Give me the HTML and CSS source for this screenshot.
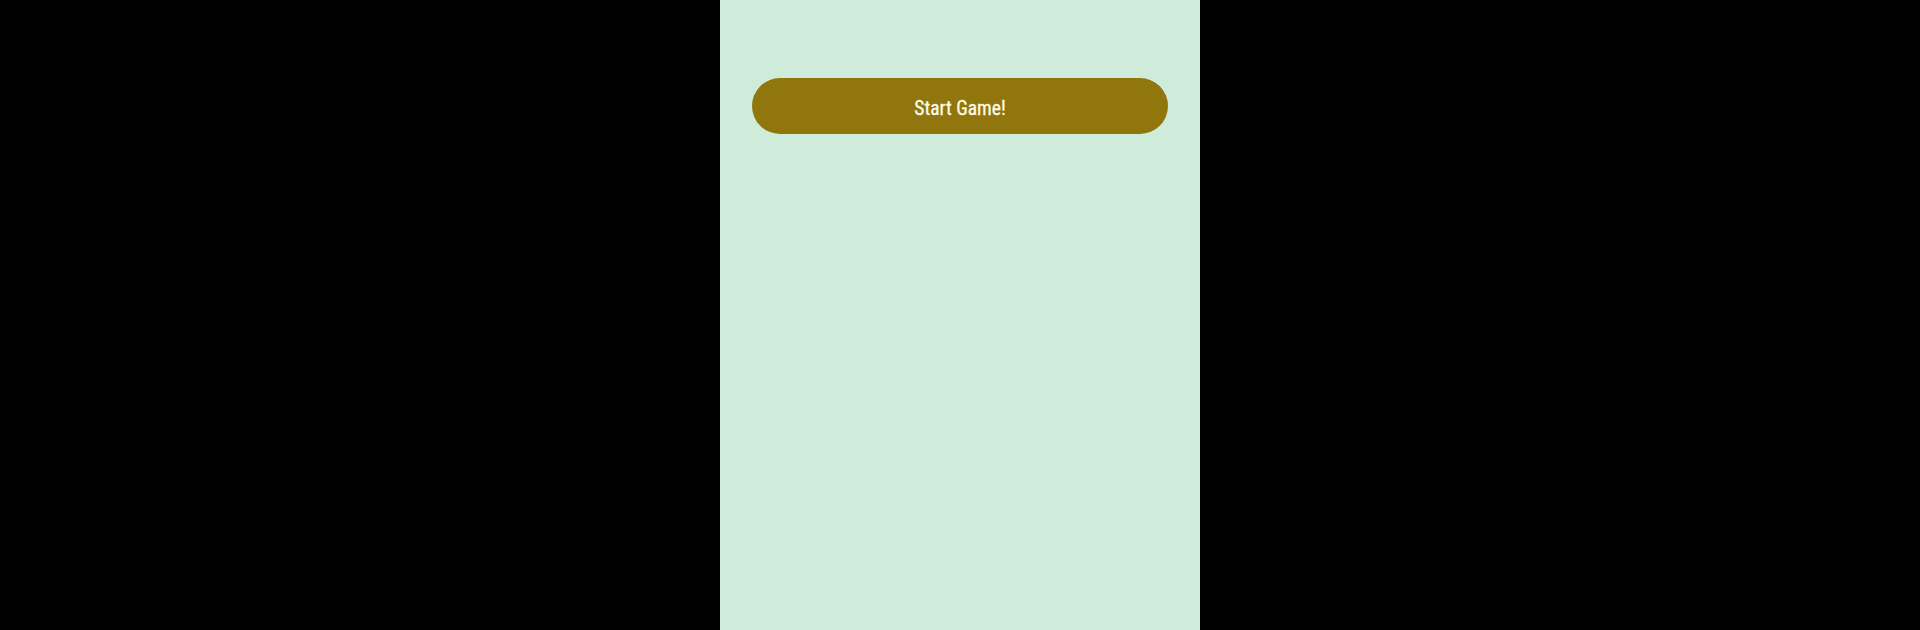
FILE: index.html
```html
<!DOCTYPE html>
<html>
<head>
<meta charset="utf-8">
<link rel="stylesheet" href="styles.css">
</head>
<body>
<div class="stage">
  <main class="panel">
    <button class="start-btn"><span class="label">Start Game!</span></button>
  </main>
</div>
</body>
</html>
```

FILE: styles.css
```css
html, body {
  margin: 0;
  padding: 0;
  height: 100%;
  background: #000;
}
.stage {
  display: flex;
  justify-content: center;
  height: 630px;
}
.panel {
  width: 480px;
  height: 100%;
  background: #cfebd9;
  box-sizing: border-box;
  padding: 78px 32px 0;
  display: flex;
  flex-direction: column;
}
.start-btn {
  height: 56px;
  width: 100%;
  border: none;
  border-radius: 28px;
  background: #91760d;
  color: #fffbe6;
  font-family: "Roboto Condensed", Roboto, "Liberation Sans", sans-serif;
  font-size: 19.5px;
  font-weight: 400;
  -webkit-text-stroke: 0.3px #fffbe6;
  display: flex;
  align-items: center;
  justify-content: center;
  padding: 4px 0 0;
  cursor: pointer;
}
.label {
  display: inline-block;
}
```
